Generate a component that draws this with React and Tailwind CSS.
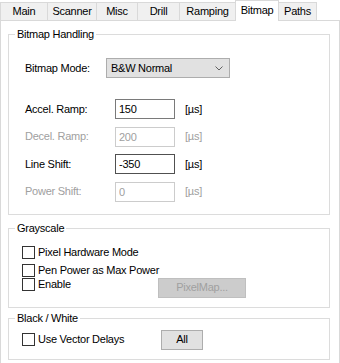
import React from 'react';

const tabs = [
  { name: 'Main', w: 'w-[47px]' },
  { name: 'Scanner', w: 'w-[49px]' },
  { name: 'Misc', w: 'w-[41px]' },
  { name: 'Drill', w: 'w-[42px]' },
  { name: 'Ramping', w: 'w-[56px]' },
  { name: 'Bitmap', w: 'w-[44px]', active: true },
  { name: 'Paths', w: 'w-[38px]' },
];

function Field({ label, value, disabled, dark }) {
  return (
    <div className="flex items-center h-[20px]">
      <span className={`w-[90px] ${disabled ? 'text-[#a0a0a0]' : 'text-black'}`}>{label}</span>
      <input
        type="text"
        defaultValue={value}
        disabled={disabled}
        className={`w-[60px] h-[20px] px-[3px] bg-white outline-none border ${
          disabled ? 'border-[#cccccc] text-[#a0a0a0]' : dark ? 'border-[#505050] text-black' : 'border-[#7a7a7a] text-black'
        }`}
      />
      <span className={`ml-[10px] ${disabled ? 'text-[#a0a0a0]' : 'text-black'}`}>[µs]</span>
    </div>
  );
}

function Check({ label }) {
  return (
    <div className="flex items-center h-[13px]">
      <span className="w-[13px] h-[13px] border border-[#333333] bg-white shrink-0" />
      <span className="ml-[3px]">{label}</span>
    </div>
  );
}

function Group({ title, children, className = '' }) {
  return (
    <fieldset className={`border border-[#dcdcdc] ml-[7px] mr-[9px] ${className}`}>
      <legend className="ml-[6px] px-[2px] leading-[13px]">{title}</legend>
      {children}
    </fieldset>
  );
}

export default function App() {
  return (
    <div className="w-[340px] h-[363px] bg-white overflow-hidden text-[11px] leading-[13px] tracking-[-0.25px] text-black font-['Liberation_Sans',Arial,sans-serif]">
      <div className="flex items-end h-[20px] relative z-10">
        {tabs.map((t, i) =>
          t.active ? (
            <div
              key={t.name}
              className={`${t.w} h-[21px] -mb-px bg-white border-l border-t border-r border-[#d9d9d9] flex items-start justify-center pt-[3px]`}
            >
              {t.name}
            </div>
          ) : (
            <div
              key={t.name}
              className={`${t.w} h-[18px] bg-[#f0f0f0] border-t border-[#d9d9d9] flex items-center justify-center ${
                tabs[i - 1] && tabs[i - 1].active ? '' : 'border-l'
              } ${i === tabs.length - 1 ? 'border-r' : ''}`}
            >
              {t.name}
            </div>
          )
        )}
      </div>
      <div className="border border-[#d9d9d9] h-[350px] pt-[7px]">
        <Group title="Bitmap Handling">
          <div className="pl-[16px] pt-[17px] pb-[12px]">
            <div className="flex items-center h-[20px]">
              <span className="w-[81px]">Bitmap Mode:</span>
              <div className="w-[124px] h-[20px] bg-[#e1e1e1] border border-[#adadad] flex items-center justify-between pl-[4px] pr-[6px]">
                <span>B&amp;W Normal</span>
                <svg width="8" height="5" viewBox="0 0 8 5" fill="none">
                  <path d="M0.5 0.5L4 4L7.5 0.5" stroke="#606060" strokeWidth="1" />
                </svg>
              </div>
            </div>
            <div className="mt-[21px] flex flex-col gap-[7.5px]">
              <Field label="Accel. Ramp:" value="150" />
              <Field label="Decel. Ramp:" value="200" disabled />
              <Field label="Line Shift:" value="-350" dark />
              <Field label="Power Shift:" value="0" disabled />
            </div>
          </div>
        </Group>
        <Group title="Grayscale" className="mt-[7px]">
          <div className="pl-[13px] pt-[11px] pb-[9px]">
            <Check label="Pixel Hardware Mode" />
            <div className="mt-[5px]">
              <Check label="Pen Power as Max Power" />
            </div>
            <div className="mt-[1px] flex items-start">
              <div className="w-[136px]">
                <Check label="Enable" />
              </div>
              <button
                disabled
                className="w-[88px] h-[20px] bg-[#cccccc] border border-[#bfbfbf] text-[#a0a0a0] flex items-center justify-center"
              >
                PixelMap...
              </button>
            </div>
          </div>
        </Group>
        <Group title="Black / White" className="mt-[4px]">
          <div className="pl-[13px] pt-[5px] pb-[9px] flex items-center">
            <div className="w-[139px]">
              <Check label="Use Vector Delays" />
            </div>
            <button className="w-[42px] h-[20px] bg-[#e1e1e1] border border-[#adadad] flex items-center justify-center">
              All
            </button>
          </div>
        </Group>
      </div>
    </div>
  );
}
